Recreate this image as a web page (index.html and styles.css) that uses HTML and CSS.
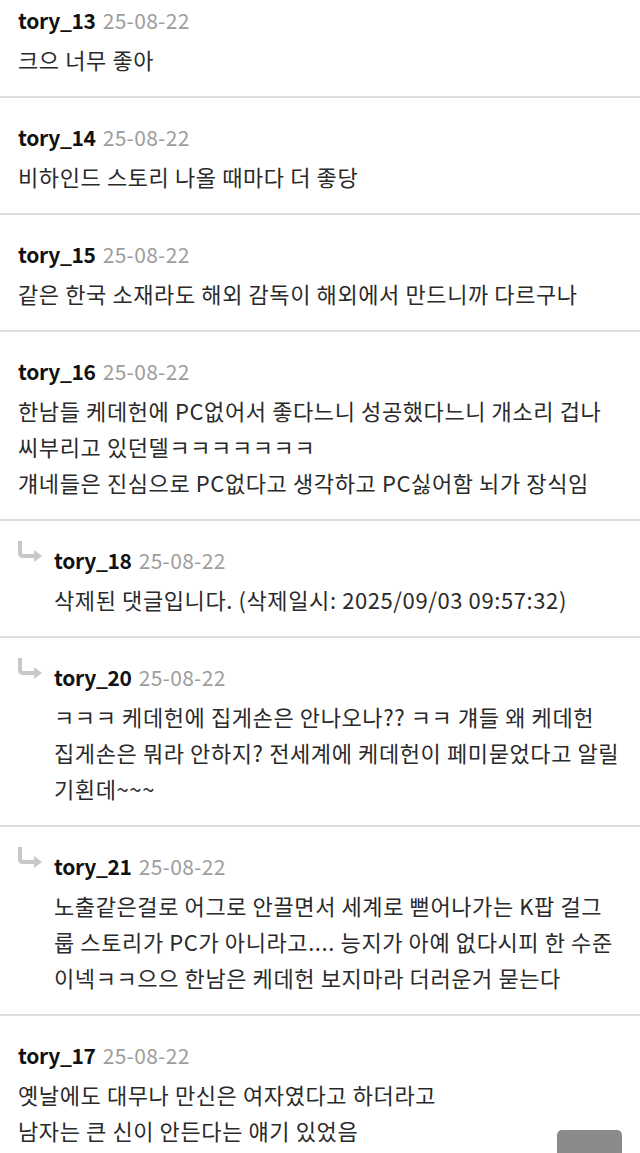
FILE: index.html
```html
<!doctype html>
<html>
<head>
<meta charset="UTF-8">
<meta name="viewport" content="width=device-width, initial-scale=1">
<link rel="stylesheet" href="styles.css">
</head>
<body>
<div class="comments">

  <div class="comment">
    <div class="head"><span class="name">tory_13</span><span class="date">25-08-22</span></div>
    <div class="text">크으 너무 좋아</div>
  </div>

  <div class="comment">
    <div class="head"><span class="name">tory_14</span><span class="date">25-08-22</span></div>
    <div class="text">비하인드 스토리 나올 때마다 더 좋당</div>
  </div>

  <div class="comment">
    <div class="head"><span class="name">tory_15</span><span class="date">25-08-22</span></div>
    <div class="text">같은 한국 소재라도 해외 감독이 해외에서 만드니까 다르구나</div>
  </div>

  <div class="comment">
    <div class="head"><span class="name">tory_16</span><span class="date">25-08-22</span></div>
    <div class="text">한남들 케데헌에 PC없어서 좋다느니 성공했다느니 개소리 겁나<br>씨부리고 있던델ㅋㅋㅋㅋㅋㅋㅋ<br>걔네들은 진심으로 PC없다고 생각하고 PC싫어함 뇌가 장식임</div>
  </div>

  <div class="comment reply">
    <svg class="arrow" width="24" height="22" viewBox="0 0 24 22"><path d="M2 0 V12 Q2 15 5 15 H18" fill="none" stroke="#c8c8c8" stroke-width="4"/><path d="M16 9 L24 15 L16 21 Z" fill="#c8c8c8"/></svg>
    <div class="head"><span class="name">tory_18</span><span class="date">25-08-22</span></div>
    <div class="text">삭제된 댓글입니다. (삭제일시: 2025/09/03 09:57:32)</div>
  </div>

  <div class="comment reply">
    <svg class="arrow" width="24" height="22" viewBox="0 0 24 22"><path d="M2 0 V12 Q2 15 5 15 H18" fill="none" stroke="#c8c8c8" stroke-width="4"/><path d="M16 9 L24 15 L16 21 Z" fill="#c8c8c8"/></svg>
    <div class="head"><span class="name">tory_20</span><span class="date">25-08-22</span></div>
    <div class="text">ㅋㅋㅋ 케데헌에 집게손은 안나오나?? ㅋㅋ 걔들 왜 케데헌<br>집게손은 뭐라 안하지? 전세계에 케데헌이 페미묻었다고 알릴<br>기횐데~~~</div>
  </div>

  <div class="comment reply">
    <svg class="arrow" width="24" height="22" viewBox="0 0 24 22"><path d="M2 0 V12 Q2 15 5 15 H18" fill="none" stroke="#c8c8c8" stroke-width="4"/><path d="M16 9 L24 15 L16 21 Z" fill="#c8c8c8"/></svg>
    <div class="head"><span class="name">tory_21</span><span class="date">25-08-22</span></div>
    <div class="text">노출같은걸로 어그로 안끌면서 세계로 뻗어나가는 K팝 걸그<br>룹 스토리가 PC가 아니라고.... 능지가 아예 없다시피 한 수준<br>이넥ㅋㅋ으으 한남은 케데헌 보지마라 더러운거 묻는다</div>
  </div>

  <div class="comment">
    <div class="head"><span class="name">tory_17</span><span class="date">25-08-22</span></div>
    <div class="text">옛날에도 대무나 만신은 여자였다고 하더라고<br>남자는 큰 신이 안든다는 얘기 있었음</div>
  </div>

</div>
<div class="top-btn"></div>
</body>
</html>
```

FILE: styles.css
```css
body{
  margin: 0;
  padding: 0;
  background: #fff;
  font-family: "Noto Sans CJK KR", "Noto Sans", sans-serif;
  color: #222;
}

.comments{
  overflow: hidden;
  height: 1153px;
}

.comment{
  padding: 24px 10px 19px 18px;
  border-bottom: 2px solid #dedede;
}

.comment:first-child{
  padding-top: 5px;
}

.reply{
  display: grid;
  grid-template-columns: 36px 1fr;
}

.reply .arrow{
  grid-row: 1;
  grid-column: 1;
  margin-top: -4px;
}

.reply .head,
.reply .text{
  grid-column: 2;
}

.head{
  height: 30px;
  line-height: 30px;
  margin-bottom: 6px;
  white-space: nowrap;
}

.name{
  font-size: 21px;
  font-weight: 700;
  color: #111;
  letter-spacing: -0.3px;
}

.date{
  margin-left: 7px;
  font-size: 21px;
  color: #9d9d9d;
  letter-spacing: 0.3px;
}

.text{
  font-size: 22px;
  line-height: 36px;
  color: #2a2a2a;
  letter-spacing: 0.6px;
  white-space: nowrap;
}

.top-btn{
  position: fixed;
  left: 557px;
  top: 1130px;
  width: 65px;
  height: 40px;
  border-radius: 5px;
  background: #8a8a8a;
}
```
